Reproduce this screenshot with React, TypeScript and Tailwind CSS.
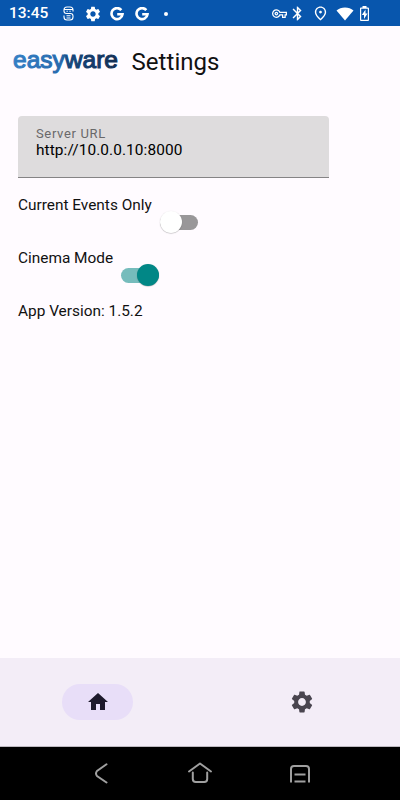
import { ReactNode } from "react";
import { MdBluetooth, MdHome, MdOutlinePlace, MdOutlineVpnKey, MdSettings } from "react-icons/md";

function GoogleIcon() {
  return (
    <svg className="h-[14px] w-[14px]" viewBox="0 0 14 14" fill="none" stroke="currentColor" strokeWidth="2.6">
      <path d="M11.3 3.1A5.5 5.5 0 1 0 12.5 7.3H7.2" />
    </svg>
  );
}

function StatusBar() {
  return (
    <header className="flex h-[26.4px] shrink-0 items-center bg-[#0856ad] pt-px text-white">
      <span className="ml-[9px] w-[54px] text-[15.5px] font-medium leading-none">13:45</span>
      <svg className="h-[15px] w-[11px]" viewBox="0 0 11 15" fill="none" stroke="currentColor" strokeWidth="1.1">
        <path d="M10 5.5V4Q10 1 7 1H4Q1 1 1 4v1q0 2.500 2.500 2.500h4Q10 7.500 10 10v1q0 3-3 3H4q-3 0-3-3V9.500" />
        <path d="M1 3.500h9M3.500 5.300h1.300M6.400 5.300h1.300M3.500 9.800h4M3.500 12h4" />
      </svg>
      <MdSettings className="ml-[10px] mr-[8px] h-[18px] w-[18px]" />
      <GoogleIcon />
      <span className="w-[11px]" />
      <GoogleIcon />
      <span className="ml-[15px] h-1 w-1 rounded-full bg-white" />
      <MdOutlineVpnKey className="ml-auto h-[15px] w-[15px]" />
      <MdBluetooth className="ml-[2px] h-[17px] w-[17px]" />
      <MdOutlinePlace className="ml-[6px] h-[17px] w-[17px]" />
      <svg className="ml-[7px] h-[14px] w-[18px]" viewBox="0 0 18 14" fill="currentColor">
        <path d="M9 13.5.5 3.500Q4 .5 9 .5t8.500 3z" />
      </svg>
      <svg className="ml-[6px] mr-[31px] h-[15px] w-[9px]" viewBox="0 0 9 15" fill="currentColor">
        <path fillRule="evenodd" d="M2.500 0h4v1.500h1.500q1 0 1 1V14q0 1-1 1H1q-1 0-1-1V2.500q0-1 1-1h1.500zM1.200 2.700v11.100h6.600V2.700z" />
        <path d="M5.500 3.500 1.800 9h2.200v4l3.500-5.500H5.500z" />
      </svg>
    </header>
  );
}

function Toggle({ on }: { on: boolean }) {
  return (
    <span className={`flex h-[15px] w-[38px] items-center rounded-full ${on ? "justify-end bg-[#76bcbc]" : "bg-[#999799]"}`}>
      <span className={`h-[22px] w-[22px] shrink-0 rounded-full ${on ? "bg-[#018786]" : "bg-white"} shadow-[0_0.5px_1px_rgba(0,0,0,0.3)]`} />
    </span>
  );
}

function SettingRow({ label, children }: { label: string; children?: ReactNode }) {
  return (
    <div className="flex h-[53.3px] text-[15.4px] leading-5">
      <span>{label}</span>
      {children && <div className="ml-[8px] pt-[20px]">{children}</div>}
    </div>
  );
}

function Logo() {
  return (
    <svg className="h-8 w-[105px]" viewBox="0 0 105 32">
      <defs>
        <linearGradient id="brand" x1="0" x2="1">
          <stop offset="0" stopColor="#347fc5" />
          <stop offset="0.46" stopColor="#2869ad" />
          <stop offset="0.52" stopColor="#17477d" />
          <stop offset="1" stopColor="#142d54" />
        </linearGradient>
      </defs>
      <text
        x="0"
        y="21.5"
        textLength="105"
        lengthAdjust="spacingAndGlyphs"
        fill="url(#brand)"
        stroke="url(#brand)"
        strokeWidth="1.1"
        fontFamily="Liberation Sans"
        fontSize="24.5"
      >
        easyware
      </text>
    </svg>
  );
}

export default function App() {
  return (
    <div className="flex h-[800px] w-[400px] flex-col overflow-hidden bg-[#fffbff] font-[Roboto,sans-serif] text-[#111111]">
      <StatusBar />
      <div className="flex h-[72px] items-center pl-[13px]">
        <Logo />
        <h1 className="ml-[13.5px] text-[24px] leading-8 tracking-[0.05px]">Settings</h1>
      </div>
      <main className="flex-1 px-[18px] pt-[17.2px]">
        <div className="h-[62.4px] w-[311px] rounded-t-[4px] border-b border-[#858485] bg-[#dedcdd] px-[18px] pt-[10px]">
          <div className="text-[13px] leading-4 tracking-[0.65px] text-[#696869]">Server URL</div>
          <div className="text-[15.4px] leading-4 tracking-[0.1px] text-black">http://10.0.0.10:8000</div>
        </div>
        <div className="pt-[16.6px]">
          <SettingRow label="Current Events Only"><Toggle on={false} /></SettingRow>
          <SettingRow label="Cinema Mode"><Toggle on /></SettingRow>
          <SettingRow label="App Version: 1.5.2" />
        </div>
      </main>
      <nav className="flex h-[88px] shrink-0 justify-between bg-[#f3edf7] pl-[62px] pr-[85px]">
        <div className="flex items-center">
          <span className="flex h-9 w-[71px] items-center justify-center rounded-full bg-[#e8def8] text-[#1d192b]">
            <MdHome className="h-6 w-6" />
          </span>
        </div>
        <div className="flex items-center text-[#49454f]">
          <MdSettings className="h-[26px] w-[26px]" />
        </div>
      </nav>
      <footer className="flex h-[54px] shrink-0 items-center border-t border-[#bdb9c0] bg-black text-[#a0a0a0]">
        <svg className="ml-[94px] h-6 w-[14px]" viewBox="0 0 14 24" fill="none" stroke="currentColor" strokeWidth="2" strokeLinecap="round">
          <path d="M12.500 2.300 3 9Q1 11.500 3 14L12.500 20.500" />
        </svg>
        <svg className="ml-[79px] h-6 w-[26px]" viewBox="0 0 26 24" fill="none" stroke="currentColor" strokeWidth="2" strokeLinecap="round" strokeLinejoin="round">
          <path d="m2 9.500 11-8 11 8M5.800 10.500V17q0 3 3 3h8.400q3 0 3-3v-6.500" />
        </svg>
        <svg className="ml-[76px] h-6 w-[22px]" viewBox="0 0 22 24" fill="none" stroke="currentColor" strokeWidth="2">
          <path d="M2 20.500V7q0-3 3-3h12q3 0 3 3v13.500M5.500 12.500h11M5.500 19.500h11" />
        </svg>
      </footer>
    </div>
  );
}
